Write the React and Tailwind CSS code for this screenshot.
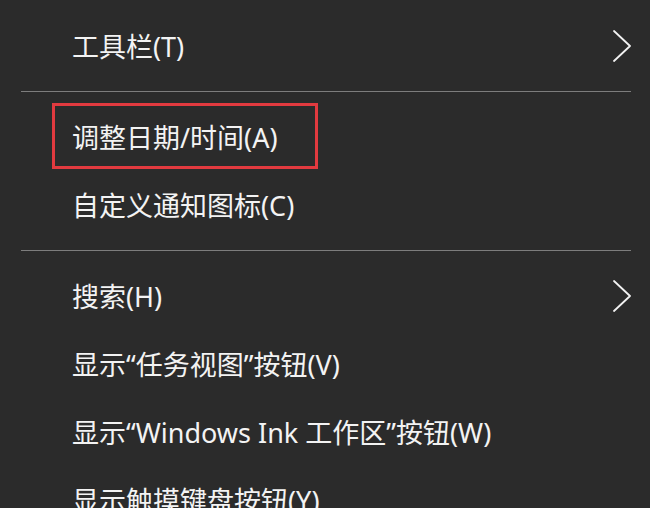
import React from "react";

const Chevron = () => (
  <svg className="w-[20px] h-[32px] text-[#f2f2f2]" viewBox="0 0 20 32" fill="none" stroke="currentColor" strokeWidth="1.8" strokeLinecap="round" strokeLinejoin="round">
    <polyline points="2,1 18,16 2,31" />
  </svg>
);

const Item = ({ label, submenu, marked }) => (
  <div className="relative h-[68px] flex items-center justify-between pl-[72px] pr-[18px]">
    <span className="text-[27px] leading-none text-[#f3f3f3] whitespace-nowrap">{label}</span>
    {submenu && <Chevron />}
    {marked && (
      <div className="absolute left-[52px] top-0 w-[266px] h-[66px] border-[3px] border-[#e23a3f]" />
    )}
  </div>
);

const Separator = () => (
  <div className="py-[11px] pl-[21px] pr-[19px]">
    <div className="h-px bg-[#7d7d7d]" />
  </div>
);

export default function App() {
  return (
    <div
      className="w-[650px] h-[508px] overflow-hidden bg-[#2b2b2b] pt-[12px]"
      style={{ fontFamily: '"Noto Sans", "Noto Sans CJK SC", sans-serif' }}
    >
      <Item label="工具栏(T)" submenu />
      <Separator />
      <Item label="调整日期/时间(A)" marked />
      <Item label="自定义通知图标(C)" />
      <Separator />
      <Item label="搜索(H)" submenu />
      <Item label="显示“任务视图”按钮(V)" />
      <Item label="显示“Windows Ink 工作区”按钮(W)" />
      <Item label="显示触摸键盘按钮(Y)" />
    </div>
  );
}
